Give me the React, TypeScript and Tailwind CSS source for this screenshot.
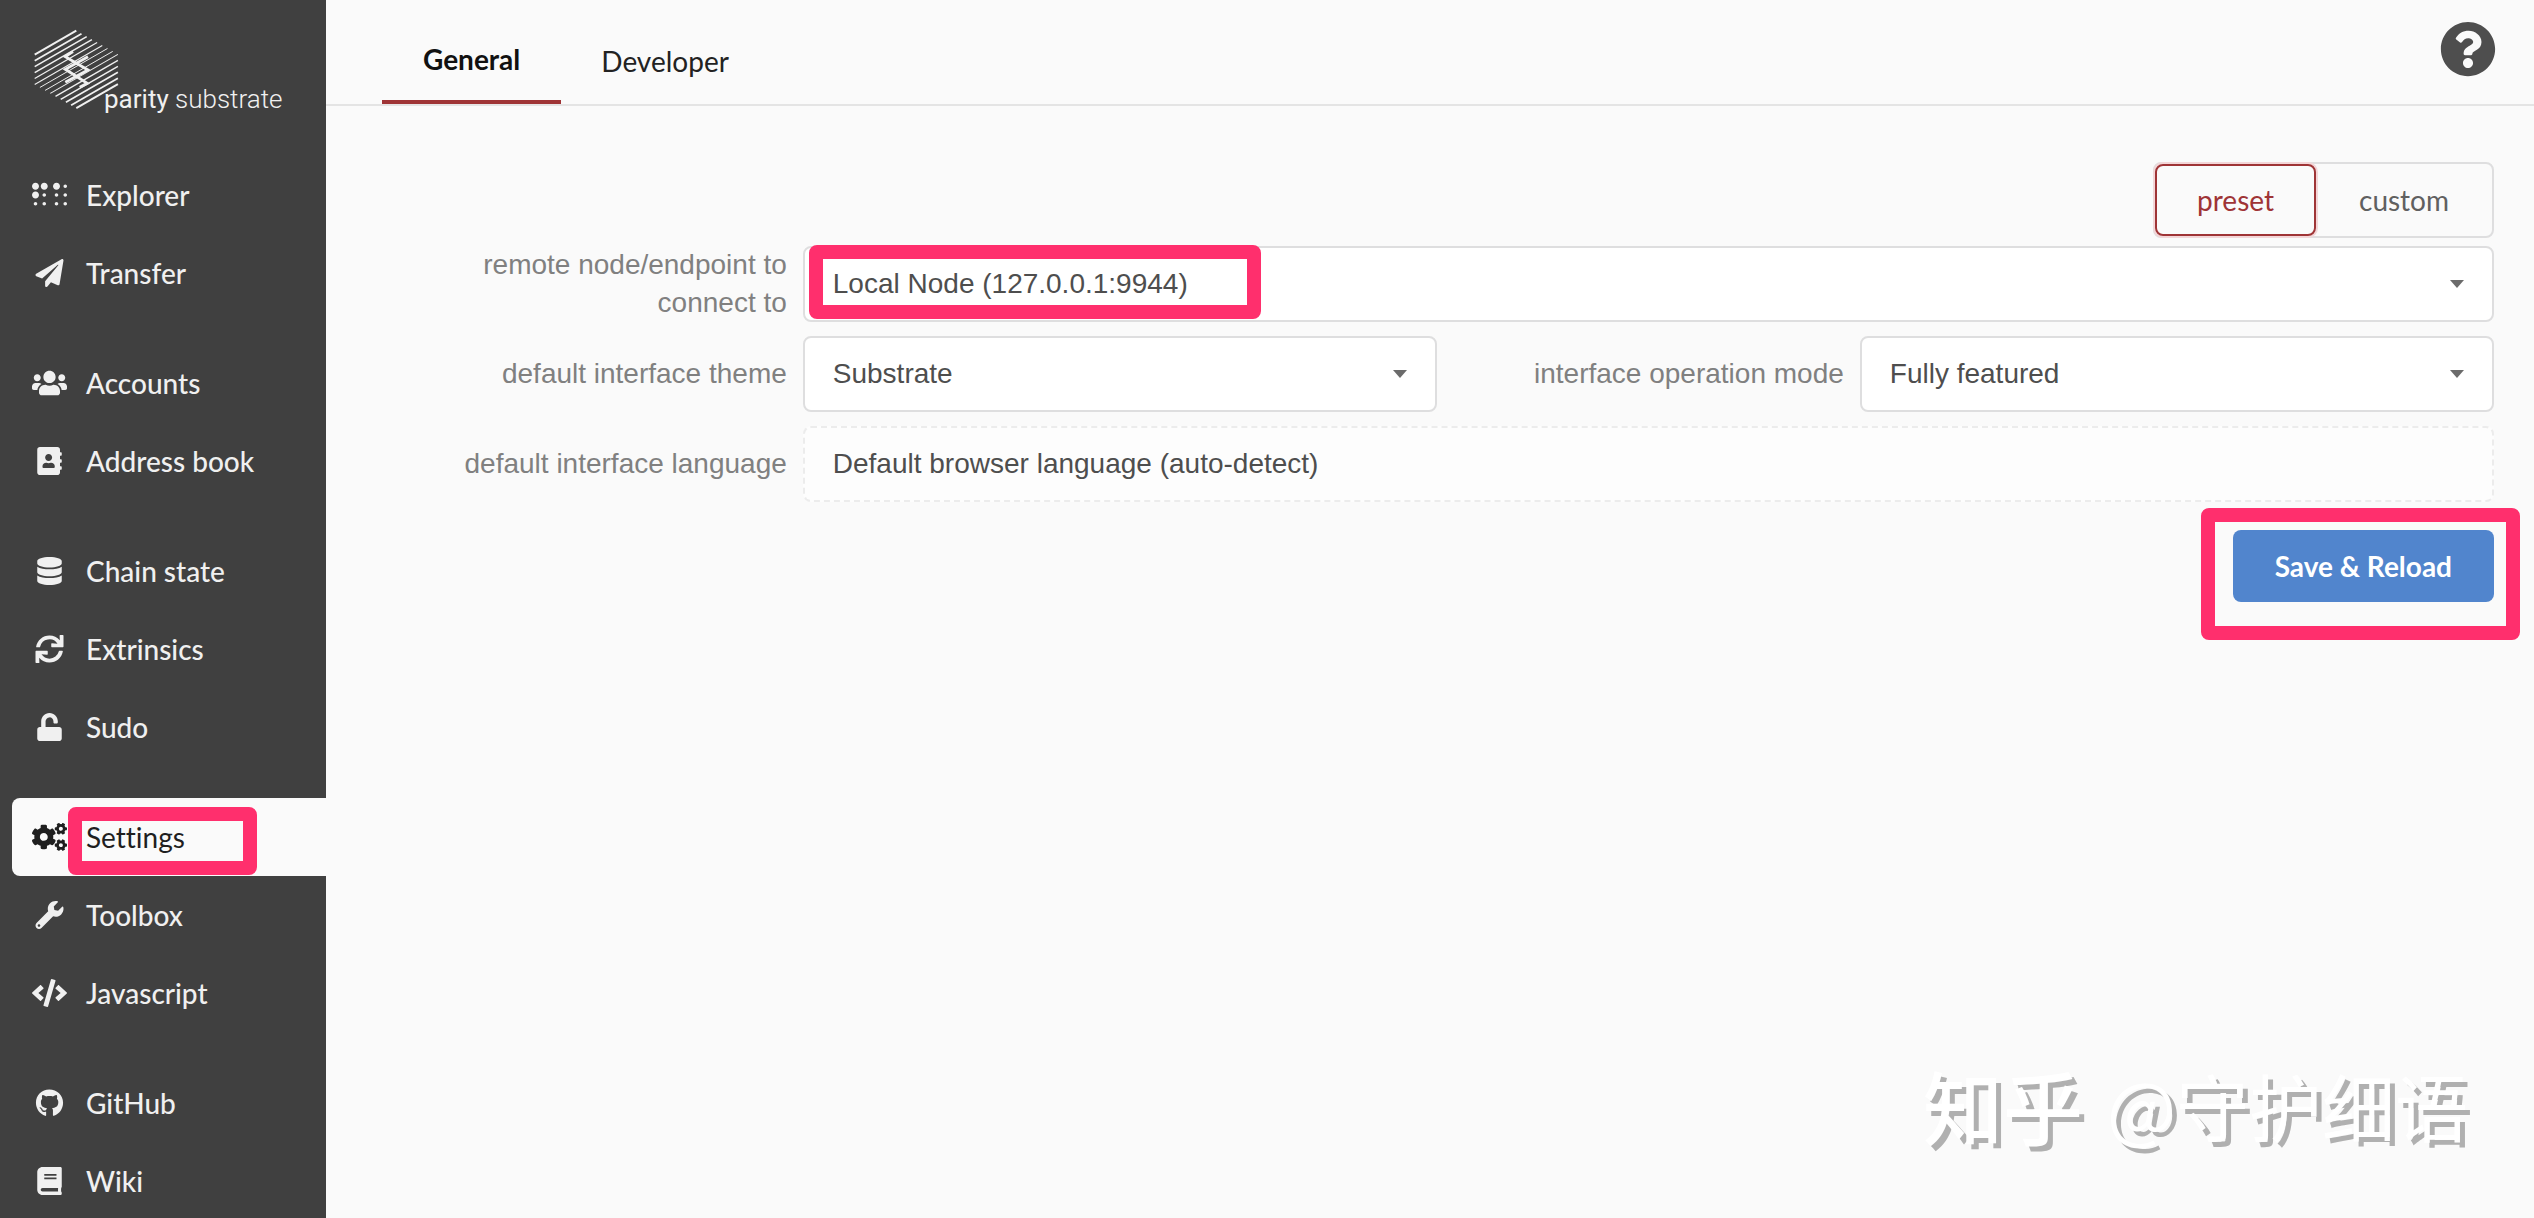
import React from 'react';
import {
  FaAddressBook,
  FaBook,
  FaBraille,
  FaCode,
  FaCogs,
  FaDatabase,
  FaGithub,
  FaPaperPlane,
  FaQuestionCircle,
  FaSync,
  FaUnlock,
  FaUsers,
  FaWrench,
} from 'react-icons/fa';
import type { IconType } from 'react-icons';

type NavItem = { label: string; icon: IconType; active?: boolean };

const navGroups: NavItem[][] = [
  [
    { label: 'Explorer', icon: FaBraille },
    { label: 'Transfer', icon: FaPaperPlane },
  ],
  [
    { label: 'Accounts', icon: FaUsers },
    { label: 'Address book', icon: FaAddressBook },
  ],
  [
    { label: 'Chain state', icon: FaDatabase },
    { label: 'Extrinsics', icon: FaSync },
    { label: 'Sudo', icon: FaUnlock },
  ],
  [
    { label: 'Settings', icon: FaCogs, active: true },
    { label: 'Toolbox', icon: FaWrench },
    { label: 'Javascript', icon: FaCode },
  ],
  [
    { label: 'GitHub', icon: FaGithub },
    { label: 'Wiki', icon: FaBook },
  ],
];

// parallel hatch lines filling the logo hexagon, thickest at its outer corners
const hatch = Array.from({ length: 14 }, (_, k) => {
  const from = Math.max(0, 5.2 * (k - 5));
  const to = Math.min(83.2, 41.6 + 5.2 * k);
  const y = 25.7 + 5.96 * k;
  return {
    x1: 1.7 + from,
    y1: y - 0.577 * from,
    x2: 1.7 + to,
    y2: y - 0.577 * to,
    strokeWidth: 0.9 + Math.abs(k - 6.5) * 0.16,
  };
});

const Logo: React.FC = () => (
  <a href="#" className="relative mt-7 mb-[39px] ml-8 block h-[89px] w-[252px] text-[#f0f0f0]">
    <svg className="h-[82px] w-[90px]" viewBox="-1 -1 90 82" fill="none" stroke="currentColor">
      {hatch.map((line, i) => (
        <line key={i} {...line} />
      ))}
      <path d="M40 22.7 32.3 27.7 55 41 32.3 53.3M55 27.7 32.3 40.3 54.3 54.3 46.7 58.3" strokeWidth="2.8" />
    </svg>
    <span className="absolute bottom-0 left-[72px] font-[Roboto,sans-serif] text-[26px] font-light whitespace-nowrap">
      <span className="font-normal">parity</span> substrate
    </span>
  </a>
);

const Highlight: React.FC<{ className: string }> = ({ className }) => (
  <div className={`pointer-events-none absolute rounded-lg border-14 border-[#ff2f6d] ${className}`} />
);

const Sidebar: React.FC = () => (
  <aside className="w-[326px] shrink-0 overflow-y-auto bg-[#404040] [scrollbar-width:none]">
    <Logo />
    <nav className="flex flex-col gap-8 pl-3">
      {navGroups.map((group, i) => (
        <ul key={i}>
          {group.map(({ label, icon: Icon, active }) => (
            <li key={label} className="relative">
              <a
                href="#"
                className={`flex h-[78px] items-center gap-[19px] rounded-l-lg pl-5 ${
                  active ? 'bg-[#fafafa] text-[#1f1f1f]' : 'font-medium text-[#f0f0f0]'
                }`}
              >
                <Icon className="h-7 w-[35px] shrink-0" />
                {label}
              </a>
              {active && <Highlight className="top-[9px] left-14 h-[68px] w-[189px]" />}
            </li>
          ))}
        </ul>
      ))}
    </nav>
  </aside>
);

type SelectProps = { id: string; value: string; disabled?: boolean };

const Select: React.FC<SelectProps> = ({ id, value, disabled }) => (
  <div className="relative flex-1">
    <select
      id={id}
      disabled={disabled}
      className={`h-[76px] w-full appearance-none rounded-lg border-2 px-7 font-[Liberation_Sans,sans-serif] text-[#4e4e4e] opacity-100 ${
        disabled ? 'border-dashed border-[#ececec] bg-[#fdfdfd]' : 'border-[#dededf] bg-white'
      }`}
    >
      <option>{value}</option>
    </select>
    {!disabled && (
      <svg className="pointer-events-none absolute top-[34px] right-[29px] h-2 w-4 text-[#6b6b6b]" viewBox="0 0 16 8">
        <path d="M1 0h14L8 8z" fill="currentColor" />
      </svg>
    )}
  </div>
);

const Field: React.FC<SelectProps & { label: string; wide?: boolean }> = ({ label, wide, ...select }) => (
  <div className="flex flex-1">
    <label
      htmlFor={select.id}
      className={`flex items-center justify-end pr-4 text-right font-[Liberation_Sans,sans-serif] leading-[38px] text-[#808080] ${
        wide ? 'w-1/5 pl-16' : 'w-2/5'
      }`}
    >
      {label}
    </label>
    <Select {...select} />
  </div>
);

const App: React.FC = () => {
  return (
    <div className="flex h-screen overflow-hidden bg-[#fafafa] font-[Lato,sans-serif] text-[28px] leading-9 [font-variant-ligatures:none]">
      <Sidebar />

      <main className="relative min-w-0 flex-1">
        {/* Tabs */}
        <header className="flex h-[106px] items-stretch justify-between border-b-2 border-[#e4e4e4] pr-[38px] pl-14">
          <nav className="flex">
            <a href="#" className="flex items-center border-b-4 border-[#9f3436] px-[41px] pt-[18px] font-bold text-[#111]">
              General
            </a>
            <a href="#" className="flex items-center px-10 pt-[18px] text-[#222]">
              Developer
            </a>
          </nav>
          <button aria-label="Help" className="mb-1.5 self-center text-[#4e4e4e]">
            <FaQuestionCircle className="size-14" />
          </button>
        </header>

        {/* Settings form */}
        <form className="pt-14 pr-10 pl-[54px]">
          <div className="mb-2 flex justify-end">
            <div className="flex h-[76px] rounded-lg border-2 border-[#dededf]">
              <button
                type="button"
                className="rounded-lg border-2 border-[#9f3436] px-10 text-[#9f3436] ring-2 ring-[#f3d6d8]"
              >
                preset
              </button>
              <button type="button" className="px-[43px] text-[#606060]">
                custom
              </button>
            </div>
          </div>

          <div className="flex flex-col gap-[14px]">
            <div className="relative flex">
              <Field id="endpoint" label="remote node/endpoint to connect to" value="Local Node (127.0.0.1:9944)" wide />
              <div className="pointer-events-none absolute inset-y-0 left-1/5">
                <Highlight className="-top-px left-1.5 h-[74px] w-[452px]" />
              </div>
            </div>
            <div className="flex">
              <Field id="theme" label="default interface theme" value="Substrate" />
              <Field id="mode" label="interface operation mode" value="Fully featured" />
            </div>
            <div className="flex">
              <Field
                id="language"
                label="default interface language"
                value="Default browser language (auto-detect)"
                wide
                disabled
              />
            </div>
          </div>

          <div className="mt-7 flex justify-end">
            <div className="relative">
              <button type="button" className="h-[72px] rounded-lg bg-[#5185cd] px-[42px] font-bold text-white">
                Save &amp; Reload
              </button>
              <Highlight className="-top-[22px] -right-[26px] h-[132px] w-[319px]" />
            </div>
          </div>
        </form>

        <div className="pointer-events-none absolute right-[66px] bottom-24 flex items-center gap-6 font-[Noto_Sans_CJK_SC,sans-serif] text-[73px] text-white [text-shadow:5px_5px_0_#b0b0b0]">
          <span className="text-[80px] font-medium">知乎</span>
          <span>@守护细语</span>
        </div>
      </main>
    </div>
  );
};

export default App;
